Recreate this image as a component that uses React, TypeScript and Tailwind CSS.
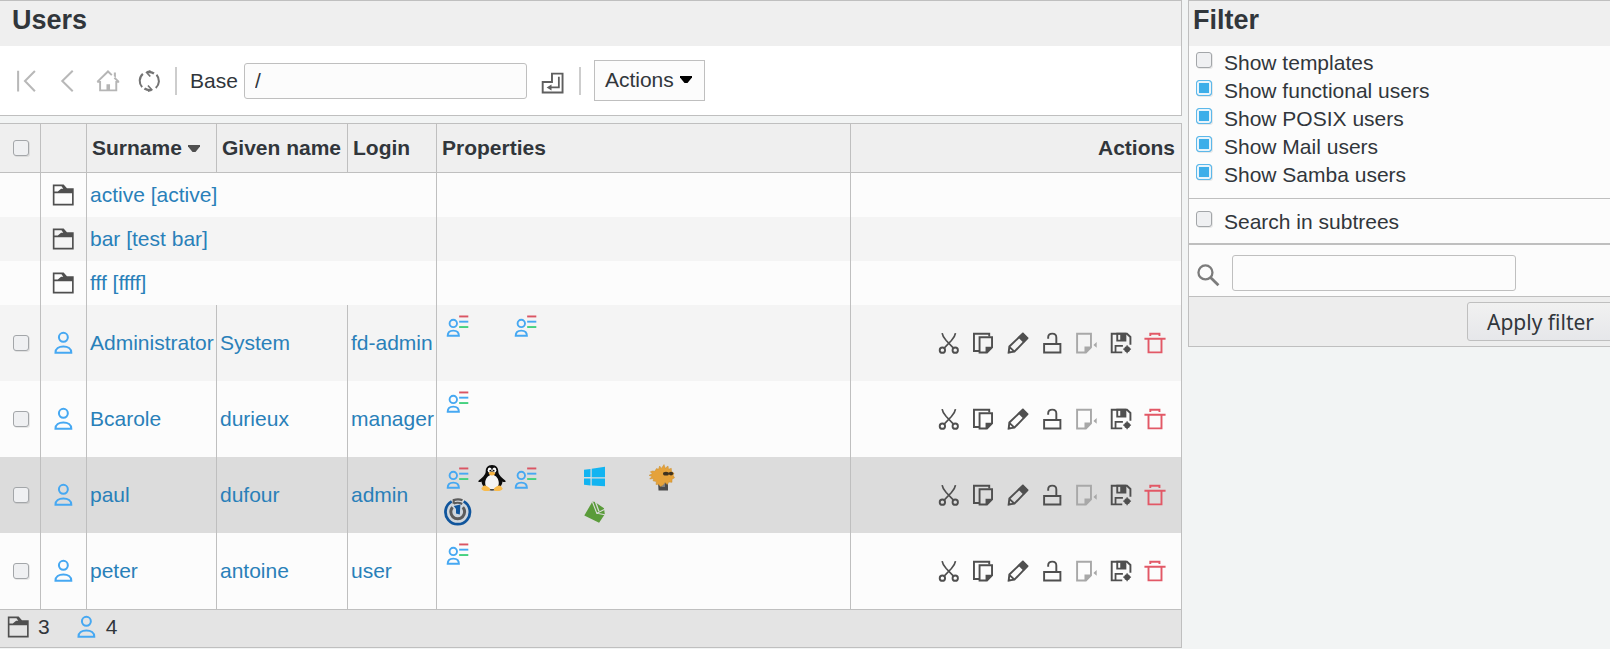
import type { ReactNode } from "react";

const INK = "#4f4f4f";
const BLUE = "#46a8f2";

function Icon({ children }: { children: ReactNode }) {
  return (
    <svg viewBox="0 0 22 22" className="block size-7 shrink-0" fill="none" aria-hidden="true">
      {children}
    </svg>
  );
}

const FolderIcon = () => (
  <Icon>
    <path
      fill={INK}
      fillRule="evenodd"
      d="M3 2.800h8.500l2.600 2.900h5.300v13.500H3zM4.300 4.100v4.200h2.600l2.600-2.300h1.700L9.800 4.100zM4.300 9.700v8.200h13.800V9.700z"
    />
  </Icon>
);

const UserIcon = () => (
  <Icon>
    <g stroke={BLUE} strokeWidth="1.600">
      <circle cx="11.300" cy="6.500" r="3.500" />
      <path d="M5.100 18.600c0-3 2.600-4.800 6.200-4.800s6.200 1.800 6.200 4.800z" />
    </g>
  </Icon>
);

const UserPropsIcon = () => (
  <Icon>
    <g stroke={BLUE} strokeWidth="1.500">
      <circle cx="7.300" cy="9" r="2.900" />
      <path d="M2.900 18.700c0-2.700 1.700-4.100 4.400-4.100s4.400 1.400 4.400 4.100z" />
      <path d="M11.900 7.600h7.200" />
      <path d="M11.900 3.500h7.200" stroke="#da5563" />
      <path d="M11.900 11.800h7.200" stroke="#46d180" />
    </g>
  </Icon>
);

const PenguinIcon = () => (
  <svg viewBox="0 0 28 28" className="block size-7" aria-hidden="true">
    <path
      fill="#0c0c0c"
      d="M14 1c-4.500 0-6.300 3-6.300 6.500 0 2-1 3-2.200 4.700C3.500 14.500 1.500 15.500.3 17c-.5 1.300 2 1.300 3.200.5C4 22 7.500 26.500 14 26.500S24 22 24.500 17.500c1.200.8 3.700.8 3.200-.5-1.200-1.500-3.200-2.500-5.200-4.800-1.200-1.700-2.200-2.700-2.200-4.700C20.300 4 18.500 1 14 1z"
    />
    <path fill="#f4f4f4" d="M14 10.500c-4.500 1-6.800 4.500-6.800 8.500 0 4 3.200 6.300 6.800 6.300s6.800-2.300 6.800-6.300c0-4-2.300-7.500-6.800-8.500z" />
    <ellipse cx="11.700" cy="6.200" rx="2" ry="2.700" fill="#fff" />
    <ellipse cx="16.300" cy="6.200" rx="2" ry="2.700" fill="#fff" />
    <circle cx="12.300" cy="6.700" r=".9" fill="#111" />
    <circle cx="15.700" cy="6.700" r=".9" fill="#111" />
    <path fill="#f5b342" d="M14 7.800c-1.800 0-3.300 1-3.300 1.800 0 .9 1.800 2 3.300 2s3.300-1.100 3.300-2c0-.8-1.500-1.800-3.300-1.800z" />
    <path fill="#f9bb4c" d="M6.500 21.500c-1.500 0-2 1.800-3.200 3C4 27 7 27.200 10.500 27c2.200-.3 2.200-2.200.8-3.200-1.500-1-3-2.300-4.800-2.300zM21.500 21.500c1.500 0 2 1.800 3.200 3C24 27 21 27.200 17.500 27c-2.200-.3-2.200-2.200-.8-3.200 1.500-1 3-2.300 4.800-2.300z" />
  </svg>
);

const WindowsIcon = () => (
  <svg viewBox="0 0 28 28" className="block size-7" aria-hidden="true">
    <path fill="#12b4f1" d="M4 5.800l6.500-.9v8.200H4zM11.700 4.700L25 2.800v10.500H11.700zM4 14.500h6.500v7L4 20.700zM11.700 14.500H25v7.800l-13.300-.9z" />
  </svg>
);

const FishIcon = () => (
  <svg viewBox="0 0 28 28" className="block size-7" aria-hidden="true">
    <path fill="#4a4a4a" d="M10 17h10v9.500H10.500z" />
    <path fill="#808080" d="M13 19h4v4h-3.500z" />
    <path
      fill="#e5a23a"
      stroke="#c88e33"
      strokeWidth=".5"
      d="M4.500 7l2.300.3L8.500 4.500l2 .8L11.700 2l1.700 2.400L16 .6l1.200 3.700L20 2l.5 3.300 2.800-1 .2 3.200 2.500 1.700-.8 2.300 1.300 2.300-2.500 1.500v3l-3.200-.2-1.500 2.500-2.300-2-2 2.500-2.500 1.500-2-2.300-2.500.3.300-3-3.300-.8.700-2.300-4 .5 2.300-2.500-3-1.200 3.300-1.500-2-2z"
    />
    <ellipse cx="18" cy="9.700" rx="3" ry="1.900" fill="#3f3320" />
    <ellipse cx="23" cy="9.600" rx="2.300" ry="1.800" fill="#3f3320" />
  </svg>
);

const RingIcon = () => (
  <svg viewBox="0 0 28 28" className="block size-7" fill="none" aria-hidden="true">
    <circle cx="13.700" cy="14" r="10.800" fill="#cfd6dc" />
    <path stroke="#10559c" strokeWidth="2.800" d="M7.700 3.400a12.200 12.200 0 1 0 12 0" />
    <path stroke="#5c5c5c" strokeWidth="3" d="M8.600 9.200a6.900 6.900 0 1 0 10.200 0" />
    <path stroke="#5c5c5c" strokeWidth="2.200" d="M9.700 5.800V2.100c3-1 6-1 8.800.2M9.700 5.400c3-1 6-.8 8.500.6" />
    <path fill="#10559c" d="M9.800 8l6.600-1.500-.6 10-3.800-1V11z" />
  </svg>
);

const SieveIcon = () => (
  <svg viewBox="0 0 28 28" className="block size-7" aria-hidden="true">
    <path fill="#5a9b3a" d="M12.300 3.800L4.300 17.500l14.800 7.300 5.700-8.500-.8-6-9.500-6.500z" />
    <path fill="none" stroke="#dcdcdc" strokeWidth="1.100" d="M12.500 4l4.300 11.300 8-4M17 15.300l8 1.500" />
    <path fill="#dcdcdc" d="M14.500 3l1.800 1.300L19.500 13l-1.200.6z" />
  </svg>
);

const CutIcon = () => (
  <Icon>
    <g stroke={INK} strokeWidth="1.500">
      <circle cx="5.800" cy="16.600" r="2.100" />
      <circle cx="15.900" cy="16.600" r="2.100" />
      <path d="M5.600 3.200c.3 2.300 1.400 3.800 3.200 5.800l5.700 6M16.100 3.200c-.3 2.300-1.400 3.800-3.200 5.800l-5.700 6" strokeWidth="1.300" />
    </g>
  </Icon>
);

const CopyIcon = () => (
  <Icon>
    <path stroke={INK} strokeWidth="1.500" d="M8 17.300H3.900V3.700h12v2.200" />
    <path stroke={INK} strokeWidth="1.500" d="M8.300 6.500h9.800v8l-4 4H8.300z" />
    <path fill={INK} d="M13 19v-5h5.700z" />
  </Icon>
);

const EditIcon = () => (
  <Icon>
    <path stroke={INK} strokeWidth="1.500" d="M3.700 18.400l.5-4.600L14.500 3.900l3.600 3.600L8.200 17.800zM4.200 14l4 3.800" />
    <path fill={INK} d="M11 6.500l3.900-3.900 4.500 4.500-3.900 3.900zM3 19.200l.3-2.900 2.600 2.500z" />
  </Icon>
);

const UnlockIcon = () => (
  <Icon>
    <path stroke={INK} strokeWidth="1.500" d="M4.800 11.800h12.800v6.700H4.800z" />
    <path stroke={INK} strokeWidth="1.500" d="M8 7.700V6.400c0-1.700 1.300-2.800 3.200-2.800s3.200 1.100 3.200 3v5" />
  </Icon>
);

const SnapshotIcon = () => (
  <Icon>
    <path stroke="#a8a8a8" strokeWidth="1.500" d="M4 3.700h10.900v10.800l-4 4H4z" />
    <path fill="#a8a8a8" d="M9.800 19v-5.200h5.700zM19.400 10.200v4.600l-2.600-2.300z" />
  </Icon>
);

const SaveIcon = () => (
  <Icon>
    <path stroke={INK} strokeWidth="1.500" d="M12 18.400H3.700V3.700h12L18.400 6.300v6" />
    <path fill={INK} fillRule="evenodd" d="M7.300 3h7.900v6.900H7.300zM8.800 4.400v4h1.600v-4z" />
    <path stroke={INK} strokeWidth="1.400" d="M6.700 18.400v-5.100h5.800" />
    <circle cx="15.800" cy="15.900" r="2.300" fill={INK} />
    <path stroke={INK} strokeWidth="1" d="M15.800 12.800V19M12.700 15.900h6.200" />
  </Icon>
);

const DeleteIcon = () => (
  <Icon>
    <path stroke="#e25866" strokeWidth="1.500" d="M2.700 7.700h16.600M7.300 5.500V3.700h7.200v1.800M5.900 7.700v10.700h10.200V7.700" />
  </Icon>
);

const FirstIcon = () => (
  <Icon>
    <path stroke="#b8b8b8" strokeWidth="1.600" d="M4.800 3v16.300M18 3.200L10.200 11l7.800 8" />
  </Icon>
);

const BackIcon = () => (
  <Icon>
    <path stroke="#b8b8b8" strokeWidth="1.600" d="M15.500 3L7.300 11l8.200 8" />
  </Icon>
);

const HomeIcon = () => (
  <Icon>
    <path stroke="#b5b5b5" strokeWidth="1.500" d="M2.500 11.700h2.300v6.700h12.700v-6.700h2.300M2.600 11.700L11 3.500l3 2.900M16 8.400l3.500 3.300" />
    <path fill="#b5b5b5" d="M15.600 4.300h1.600v4.200l-1.600-1.300zM9.800 13.500h2.800V18H9.800z" />
  </Icon>
);

const ReloadIcon = () => (
  <Icon>
    <path stroke="#747474" strokeWidth="1.600" d="M5.600 15.800A7.300 7.300 0 0 1 6.200 5.400M16.900 6.100a7.300 7.300 0 0 1-.6 10.400" />
    <path stroke="#747474" strokeWidth="1.900" d="M9.300 4.100a7.300 7.300 0 0 1 5.600 1M13 18a7.300 7.300 0 0 1-5.600-1.100" />
    <path stroke="#747474" strokeWidth="1.300" d="M12 7.500L9.200 4.300l3-1.300M10.200 14.500l2.900 3.300-3 1.200" />
  </Icon>
);

const SubmitIcon = () => (
  <Icon>
    <path stroke="#5f5f5f" strokeWidth="1.500" d="M10.200 3.600h8.300v14.900H2.900v-8.300h7.300z" />
    <path stroke="#5f5f5f" strokeWidth="1.400" d="M15.600 6v8.500H8.500" />
    <path fill="#5f5f5f" d="M6 14.500l3.800-2.400v4.800z" />
  </Icon>
);

const SearchIcon = () => (
  <Icon>
    <circle cx="9" cy="9" r="5.500" stroke="#7c7c7c" strokeWidth="1.800" />
    <path stroke="#7c7c7c" strokeWidth="2.200" d="M13 13l6.200 6" />
  </Icon>
);

const Caret = ({ color }: { color: string }) => (
  <svg viewBox="0 0 12 7" className="h-[7px] w-3 shrink-0" aria-hidden="true">
    <path fill={color} d="M0 0h12v1.500L7.500 7h-3L0 1.500z" />
  </svg>
);

const CHECKBOX =
  "block size-4 shrink-0 appearance-none rounded-[3px] border border-[#a3a6a9] bg-[#eff0f2] shadow-[1px_1px_0_#00000014] checked:border-[#5cb8ea] checked:bg-[#3daee9] checked:shadow-[inset_0_0_0_2px_#e9f4fb,1px_1px_0_#00000014]";

const users = [
  { surname: "Administrator", given: "System", login: "fd-admin", row: "bg-[#f4f4f4]", props: ["user", "", "user"] },
  { surname: "Bcarole", given: "durieux", login: "manager", row: "bg-[#fcfcfc]", props: ["user"] },
  {
    surname: "paul",
    given: "dufour",
    login: "admin",
    row: "bg-[#dcdcdc]",
    props: ["user", "posix", "user", "", "samba", "", "fish", "ring", "", "", "", "sieve"],
  },
  { surname: "peter", given: "antoine", login: "user", row: "bg-[#fcfcfc]", props: ["user"] },
];

const folders = [
  { name: "active [active]", row: "bg-[#fcfcfc]" },
  { name: "bar [test bar]", row: "bg-[#f4f4f4]" },
  { name: "fff [ffff]", row: "bg-[#fcfcfc]" },
];

const rowActions: [string, () => ReactNode][] = [
  ["Cut", CutIcon],
  ["Copy", CopyIcon],
  ["Edit", EditIcon],
  ["Unlock", UnlockIcon],
  ["Create snapshot", SnapshotIcon],
  ["Restore snapshot", SaveIcon],
  ["Remove", DeleteIcon],
];

const propIcons: Record<string, () => ReactNode> = {
  user: UserPropsIcon,
  posix: PenguinIcon,
  samba: WindowsIcon,
  fish: FishIcon,
  ring: RingIcon,
  sieve: SieveIcon,
};

const filters = [
  { label: "Show templates", on: false },
  { label: "Show functional users", on: true },
  { label: "Show POSIX users", on: true },
  { label: "Show Mail users", on: true },
  { label: "Show Samba users", on: true },
];

const TH = "border-r border-b border-[#bfbfbf] p-0 font-bold";
const TD = "border-r border-[#bfbfbf] p-0";
const FIELD = "h-9 rounded-[3px] border border-[#bfbfbf] bg-[#fcfcfc] px-2.5 outline-none";
const TITLE = "h-[45px] bg-[#efefef] text-[27px] leading-[38px] font-bold";

function Toolbar() {
  return (
    <div className="flex h-[69px] items-center bg-white pl-3">
      <div className="flex gap-[13px]">
        <button type="button" aria-label="Go to root"><FirstIcon /></button>
        <button type="button" aria-label="Go up"><BackIcon /></button>
        <button type="button" aria-label="Go to home"><HomeIcon /></button>
        <button type="button" aria-label="Reload"><ReloadIcon /></button>
      </div>
      <div className="ml-3 h-7 w-0.5 bg-[#cdcdcd]" />
      <label htmlFor="base" className="ml-[13px]">Base</label>
      <input id="base" type="text" defaultValue="/" className={`${FIELD} ml-1.5 w-[283px]`} />
      <button type="button" aria-label="Submit base" className="ml-3 pt-1"><SubmitIcon /></button>
      <div className="ml-3 h-7 w-0.5 bg-[#cdcdcd]" />
      <button
        type="button"
        className="ml-[13px] flex h-[41px] items-center gap-1.5 border border-[#bfbfbf] bg-[#fcfcfc] pr-3 pb-0.5 pl-2.5"
      >
        Actions
        <Caret color="#000" />
      </button>
    </div>
  );
}

function UserTable() {
  return (
    <table className="w-full table-fixed border-separate border-spacing-0 text-left whitespace-nowrap">
      <thead>
        <tr className="h-[49px] bg-[#efefef]">
          <th className={`${TH} w-[41px]`}>
            <input type="checkbox" aria-label="Select all" className={`${CHECKBOX} ml-[13px]`} />
          </th>
          <th className={`${TH} w-[46px]`} />
          <th className={`${TH} w-[130px] pl-[5px]`}>
            <a href="#surname" className="flex items-center gap-1.5">
              Surname
              <Caret color={INK} />
            </a>
          </th>
          <th className={`${TH} w-[131px] pl-[5px]`}><a href="#given">Given name</a></th>
          <th className={`${TH} w-[89px] pl-[5px]`}><a href="#login">Login</a></th>
          <th className={`${TH} w-[414px] pl-[5px]`}><a href="#properties">Properties</a></th>
          <th className="border-b border-[#bfbfbf] p-0 pr-1.5 text-right font-bold">Actions</th>
        </tr>
      </thead>
      <tbody className="text-[#2980b9]">
        {folders.map((f) => (
          <tr key={f.name} className={`${f.row} h-11`}>
            <td className={TD} />
            <td className={`${TD} pl-2`}><FolderIcon /></td>
            <td className={`${TD} pl-[3px]`} colSpan={3}><a href="#folder">{f.name}</a></td>
            <td className={TD} />
            <td className="p-0" />
          </tr>
        ))}
        {users.map((u) => (
          <tr key={u.login} className={`${u.row} h-[76px]`}>
            <td className={TD}>
              <input type="checkbox" aria-label={`Select ${u.surname}`} className={`${CHECKBOX} ml-[13px]`} />
            </td>
            <td className={`${TD} pl-2`}><UserIcon /></td>
            <td className={`${TD} pl-[3px]`}><a href="#user">{u.surname}</a></td>
            <td className={`${TD} pl-[3px]`}><a href="#user">{u.given}</a></td>
            <td className={`${TD} pl-[3px]`}><a href="#user">{u.login}</a></td>
            <td className={`${TD} pt-[7px] pl-[7px] align-top`}>
              <div className="grid grid-cols-[repeat(7,28px)] gap-1.5">
                {u.props.map((p, i) => {
                  const Prop = propIcons[p];
                  return <span key={i} className="size-7">{Prop && <Prop />}</span>;
                })}
              </div>
            </td>
            <td className="p-0 pr-3">
              <div className="ml-auto flex w-[234px] justify-between">
                {rowActions.map(([label, Glyph]) => (
                  <button key={label} type="button" aria-label={label}><Glyph /></button>
                ))}
              </div>
            </td>
          </tr>
        ))}
      </tbody>
    </table>
  );
}

function FilterRow({ label, on }: { label: string; on: boolean }) {
  return (
    <label className="flex h-7 gap-3 pl-[7px]">
      <input type="checkbox" defaultChecked={on} className={`${CHECKBOX} mt-1`} />
      <span className="leading-[29px]">{label}</span>
    </label>
  );
}

function FilterPanel() {
  return (
    <aside className="w-[422px] shrink-0 overflow-hidden border-y border-l border-[#bfbfbf] bg-[#fcfcfc]">
      <h2 className={`${TITLE} pl-1`}>Filter</h2>
      <div className="border-b border-[#bfbfbf] pt-0.5 pb-2.5">
        {filters.map((f) => (
          <FilterRow key={f.label} label={f.label} on={f.on} />
        ))}
      </div>
      <div className="border-b-2 border-[#bfbfbf] pt-2 pb-2">
        <FilterRow label="Search in subtrees" on={false} />
      </div>
      <div className="flex h-[52px] items-center border-b border-[#bfbfbf] pt-1 pl-[5px]">
        <label htmlFor="query" aria-label="Search" className="pt-1"><SearchIcon /></label>
        <input id="query" type="text" className={`${FIELD} ml-2.5 w-[284px]`} />
      </div>
      <div className="flex h-[49px] items-start justify-end bg-[#ededed] pt-[5px]">
        <button
          type="button"
          className="-mr-1 h-[39px] rounded-[3px] border border-[#bfbfbf] bg-linear-to-b from-[#f1f1f1] to-[#e6e7ea] px-[19px] font-['Noto_Sans',sans-serif] text-[21px]"
        >
          Apply filter
        </button>
      </div>
    </aside>
  );
}

export default function App() {
  return (
    <div className="flex min-h-screen items-start gap-1.5 bg-[#f2f4f4] font-['Liberation_Sans',Arial,sans-serif] text-[21px] leading-6 text-[#31363b]">
      <main className="flex min-w-0 flex-1 flex-col gap-[7px]">
        <section className="border-y border-r border-[#bfbfbf]">
          <h1 className={`${TITLE} pl-3`}>Users</h1>
          <Toolbar />
        </section>
        <section className="border-y border-r border-[#bfbfbf]">
          <UserTable />
          <div className="flex h-[38px] items-center gap-1.5 border-t border-[#bfbfbf] bg-[#e4e4e4] pb-1 pl-1">
            <FolderIcon />
            <span>3</span>
            <span className="ml-4"><UserIcon /></span>
            <span>4</span>
          </div>
        </section>
      </main>
      <FilterPanel />
    </div>
  );
}
